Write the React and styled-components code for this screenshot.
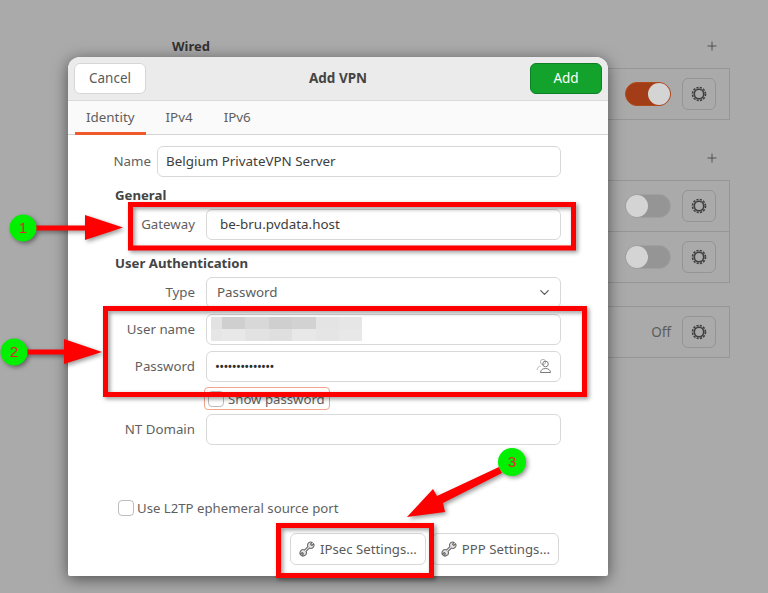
import React from "react";
import styled, { createGlobalStyle } from "styled-components";
import { ChevronDown, Plus } from "lucide-react";

const GlobalStyle = createGlobalStyle`
  html, body {
    margin: 0;
    padding: 0;
    background: #aaaaaa;
  }
  body {
    font-family: "Noto Sans", "Open Sans", sans-serif;
  }
`;

const Page = styled.div`
  position: relative;
  width: 768px;
  height: 593px;
  overflow: hidden;
  background: #aaaaaa;
`;

const SettingsColumn = styled.div`
  width: 558px;
  margin-left: 172px;
  padding-top: 36px;
  display: flex;
  flex-direction: column;
`;

const SectionHead = styled.div`
  height: 20px;
  margin-top: ${(p) => p.$top || 0}px;
  margin-bottom: 12px;
  padding-right: 11px;
  display: flex;
  align-items: center;
  justify-content: space-between;
  font-size: 13px;
  font-weight: 700;
  color: #333131;
`;

const Frame = styled.div`
  margin-top: ${(p) => p.$top || 0}px;
  border: 1px solid #969696;
  display: flex;
  flex-direction: column;
`;

const FrameRow = styled.div`
  height: 50px;
  padding-right: 13px;
  display: flex;
  align-items: center;
  justify-content: flex-end;
  gap: 11px;
  & + & {
    border-top: 1px solid #969696;
  }
`;

const Toggle = styled.div`
  width: 46px;
  height: 24px;
  box-sizing: border-box;
  border-radius: 12px;
  border: 1px solid ${(p) => (p.$on ? "#b04a1a" : "#a0a0a0")};
  background: ${(p) => (p.$on ? "#a23d17" : "#959595")};
  display: flex;
  justify-content: ${(p) => (p.$on ? "flex-end" : "flex-start")};
`;

const Knob = styled.div`
  width: 22px;
  height: 22px;
  border-radius: 50%;
  background: #d4d4d4;
`;

const GearButton = styled.div`
  width: 34px;
  height: 32px;
  box-sizing: border-box;
  border: 1px solid #949494;
  border-radius: 6px;
  display: flex;
  align-items: center;
  justify-content: center;
`;

const OffText = styled.span`
  font-size: 13.5px;
  color: #5c5c5c;
`;

const Dialog = styled.div`
  position: absolute;
  left: 68px;
  top: 57px;
  width: 540px;
  height: 519px;
  border-radius: 12px 12px 2px 2px;
  background: #ffffff;
  box-shadow: 0 3px 16px rgba(0, 0, 0, 0.55);
  display: flex;
  flex-direction: column;
  overflow: hidden;
`;

const Header = styled.div`
  height: 43px;
  padding: 0 6px;
  flex: none;
  background: #ebebeb;
  border-bottom: 1px solid #dadada;
  display: flex;
  align-items: center;
  justify-content: space-between;
`;

const HeaderButton = styled.div`
  width: 72px;
  height: 31px;
  box-sizing: border-box;
  padding-bottom: 2px;
  border-radius: 6px;
  border: 1px solid ${(p) => (p.$primary ? "#0f7f24" : "#d6d6d6")};
  background: ${(p) => (p.$primary ? "#13a32c" : "#ffffff")};
  color: ${(p) => (p.$primary ? "#ffffff" : "#5a5a5a")};
  font-size: 13.5px;
  display: flex;
  align-items: center;
  justify-content: center;
`;

const Title = styled.div`
  padding-bottom: 2px;
  font-size: 13.5px;
  font-weight: 700;
  color: #444444;
`;

const TabBar = styled.div`
  height: 33px;
  flex: none;
  padding-left: 7px;
  background: #fafafa;
  border-bottom: 1px solid #d4d4d4;
  display: flex;
  gap: 9px;
`;

const Tab = styled.div`
  padding: 0 11px;
  font-size: 13.4px;
  color: #5e5e5e;
  display: flex;
  align-items: center;
  box-sizing: border-box;
  border-bottom: 3px solid ${(p) => (p.$active ? "#f0592a" : "transparent")};
  margin-bottom: -1px;
`;

const Body = styled.div`
  flex: 1;
  padding: 11px 47px 0 0;
  display: flex;
  flex-direction: column;
`;

const FormRow = styled.div`
  margin-top: ${(p) => p.$top || 0}px;
  display: flex;
  align-items: center;
  gap: ${(p) => (p.$short ? 6 : 11)}px;
`;

const Label = styled.div`
  width: ${(p) => (p.$short ? 83 : 127)}px;
  flex: none;
  padding-bottom: 2px;
  text-align: right;
  font-size: 13.3px;
  color: #5f5f5f;
`;

const Field = styled.div`
  position: relative;
  flex: 1;
  height: 31px;
  box-sizing: border-box;
  padding: 0 8px 1px ${(p) => p.$inset}px;
  border: 1px solid #d8d8d8;
  border-radius: 6px;
  background: #ffffff;
  font-size: 13.4px;
  color: ${(p) => (p.$muted ? "#5c5c5c" : "#3d3d3d")};
  display: flex;
  align-items: center;
  justify-content: space-between;
`;

const Dots = styled.span`
  font-size: 13px;
  letter-spacing: -0.7px;
  color: #2f2f2f;
`;

const SectionTitle = styled.div`
  height: 18px;
  line-height: 18px;
  margin: ${(p) => p.$top}px 0 5px 47px;
  font-size: 13.2px;
  font-weight: 700;
  color: #444444;
`;

const Mosaic = styled.div`
  display: grid;
  grid-template-columns: 11px repeat(6, 23.4px);
  grid-template-rows: 12px 12px;
  margin-left: -4px;
`;

const Tile = styled.div`
  background: ${(p) => p.$shade};
`;

const CheckRow = styled.div`
  margin: ${(p) => p.$top}px 0 0 ${(p) => p.$left}px;
  width: ${(p) => (p.$outlined ? "126px" : "auto")};
  height: ${(p) => (p.$outlined ? "23px" : "18px")};
  box-sizing: border-box;
  padding-left: ${(p) => (p.$outlined ? 3 : 0)}px;
  border: ${(p) => (p.$outlined ? "1px solid #f0a58c" : "none")};
  border-radius: 4px;
  display: flex;
  align-items: center;
  gap: ${(p) => (p.$outlined ? 4 : 3)}px;
  font-size: 13.2px;
  white-space: nowrap;
  color: #5f5f5f;
`;

const CheckBox = styled.div`
  width: 16px;
  height: 16px;
  flex: none;
  box-sizing: border-box;
  border: 1px solid #bcbcbc;
  border-radius: 4px;
  background: #ffffff;
`;

const ButtonRow = styled.div`
  margin-top: 16px;
  padding-right: 2px;
  display: flex;
  justify-content: flex-end;
  gap: 6px;
`;

const SettingsButton = styled.div`
  height: 32px;
  box-sizing: border-box;
  padding: 0 8px;
  border: 1px solid #d8d8d8;
  border-radius: 6px;
  background: #ffffff;
  font-size: 13.2px;
  color: #5a5a5a;
  display: flex;
  align-items: center;
  gap: 5px;
`;

const Annotations = styled.svg`
  position: absolute;
  left: 0;
  top: 0;
  filter: drop-shadow(2px 2px 2px rgba(0, 0, 0, 0.4));
`;

const Badge = styled.text`
  font-family: "Liberation Sans", sans-serif;
  font-size: 15px;
  fill: #e8202a;
  text-anchor: middle;
`;

const GearIcon = () => (
  <svg width="18" height="18" viewBox="0 0 18 18" fill="none">
    <circle cx="9" cy="9" r="6.5" stroke="#3f3f3f" strokeWidth="1.6" strokeDasharray="2.2 1.2" />
    <circle cx="9" cy="9" r="4.7" stroke="#3f3f3f" strokeWidth="1.6" />
  </svg>
);

const WrenchIcon = () => (
  <svg width="16" height="16" viewBox="0 0 16 16" fill="#e4e4e4" stroke="#6a6a6a" strokeWidth="1.1" strokeLinejoin="round">
    <path d="M13.3 1.4L11.5 3.2L12.8 4.5L14.6 2.7A3.2 3.2 0 0 1 10.4 7.1L7.1 10.4A3.2 3.2 0 0 1 1.4 13.3L3.2 11.5L4.5 12.8L2.7 14.6A3.2 3.2 0 0 1 5.6 8.9L8.9 5.6A3.2 3.2 0 0 1 13.3 1.4Z" />
  </svg>
);

const PeopleIcon = () => (
  <svg width="16" height="16" viewBox="0 0 16 16" fill="none">
    <circle cx="7" cy="4" r="2.6" stroke="#b4b4b4" strokeWidth="1" />
    <path d="M1 12c.4-2.4 1.8-3.6 3.6-4" stroke="#b4b4b4" strokeWidth="1" />
    <circle cx="9.5" cy="6" r="2.8" stroke="#7a7a7a" strokeWidth="1" />
    <path d="M4.5 14.5c.3-2.6 2-4 5-4s4.7 1.4 5 4z" stroke="#7a7a7a" strokeWidth="1" strokeLinejoin="round" />
  </svg>
);

const mosaicShades = [
  "#e2e2e2", "#cfcfcf", "#d8d8d8", "#cfcfcf", "#d2d2d2", "#e4e4e4", "#e6e6e6",
  "#e6e6e6", "#e8e8e8", "#e2e2e2", "#dfdfdf", "#e8e8e8", "#e5e5e5", "#e8e8e8",
];

const App = () => {
  return (
    <Page>
      <GlobalStyle />
      <SettingsColumn>
        <SectionHead>
          Wired
          <Plus size={14} strokeWidth={1.3} color="#3a3838" />
        </SectionHead>
        <Frame>
          <FrameRow>
            <Toggle $on><Knob /></Toggle>
            <GearButton><GearIcon /></GearButton>
          </FrameRow>
        </Frame>
        <SectionHead $top={28}>
          <span />
          <Plus size={14} strokeWidth={1.3} color="#3a3838" />
        </SectionHead>
        <Frame>
          <FrameRow>
            <Toggle><Knob /></Toggle>
            <GearButton><GearIcon /></GearButton>
          </FrameRow>
          <FrameRow>
            <Toggle><Knob /></Toggle>
            <GearButton><GearIcon /></GearButton>
          </FrameRow>
        </Frame>
        <Frame $top={23}>
          <FrameRow>
            <OffText>Off</OffText>
            <GearButton><GearIcon /></GearButton>
          </FrameRow>
        </Frame>
      </SettingsColumn>

      <Dialog>
        <Header>
          <HeaderButton>Cancel</HeaderButton>
          <Title>Add VPN</Title>
          <HeaderButton $primary>Add</HeaderButton>
        </Header>
        <TabBar>
          <Tab $active>Identity</Tab>
          <Tab>IPv4</Tab>
          <Tab>IPv6</Tab>
        </TabBar>
        <Body>
          <FormRow $short>
            <Label $short>Name</Label>
            <Field $inset={8}>Belgium PrivateVPN Server</Field>
          </FormRow>
          <SectionTitle $top={9}>General</SectionTitle>
          <FormRow>
            <Label>Gateway</Label>
            <Field $inset={13}>be-bru.pvdata.host</Field>
          </FormRow>
          <SectionTitle $top={14}>User Authentication</SectionTitle>
          <FormRow>
            <Label>Type</Label>
            <Field $inset={10} $muted>
              Password
              <ChevronDown size={15} color="#5c5c5c" />
            </Field>
          </FormRow>
          <FormRow $top={6}>
            <Label>User name</Label>
            <Field $inset={8}>
              <Mosaic>
                {mosaicShades.map((shade, i) => (
                  <Tile key={i} $shade={shade} />
                ))}
              </Mosaic>
            </Field>
          </FormRow>
          <FormRow $top={6}>
            <Label>Password</Label>
            <Field $inset={8}>
              <Dots>••••••••••••••</Dots>
              <PeopleIcon />
            </Field>
          </FormRow>
          <CheckRow $outlined $top={5} $left={136}>
            <CheckBox />
            Show password
          </CheckRow>
          <FormRow $top={4}>
            <Label>NT Domain</Label>
            <Field $inset={8} />
          </FormRow>
          <CheckRow $top={54} $left={50}>
            <CheckBox />
            Use L2TP ephemeral source port
          </CheckRow>
          <ButtonRow>
            <SettingsButton><WrenchIcon />IPsec Settings...</SettingsButton>
            <SettingsButton><WrenchIcon />PPP Settings...</SettingsButton>
          </ButtonRow>
        </Body>
      </Dialog>

      {/* red markup drawn on top of the screenshot */}
      <Annotations width="768" height="593" viewBox="0 0 768 593" fill="none">
        <rect x="130.5" y="204.5" width="443" height="43.5" stroke="#fe0000" strokeWidth="5" />
        <rect x="105.5" y="308.5" width="479" height="86" stroke="#fe0000" strokeWidth="5" />
        <rect x="278.5" y="525.5" width="153" height="50" stroke="#fe0000" strokeWidth="5" />

        <path d="M36 225.5H85V215L123 227.5L85 240V230.5H36Z" fill="#fe0000" />
        <path d="M27 349.5H64V339L102 352L64 364V354.5H27Z" fill="#fe0000" />
        <path d="M499 467L502 473L443 503L445 512L407 517L433 489L437 496Z" fill="#fe0000" />

        <circle cx="23" cy="228" r="13.5" fill="#00f000" />
        <Badge x="23" y="233">1</Badge>
        <circle cx="14" cy="352" r="13.5" fill="#00f000" />
        <Badge x="14" y="357">2</Badge>
        <circle cx="512" cy="462" r="14" fill="#00f000" />
        <Badge x="512" y="467">3</Badge>
      </Annotations>
    </Page>
  );
};

export default App;
